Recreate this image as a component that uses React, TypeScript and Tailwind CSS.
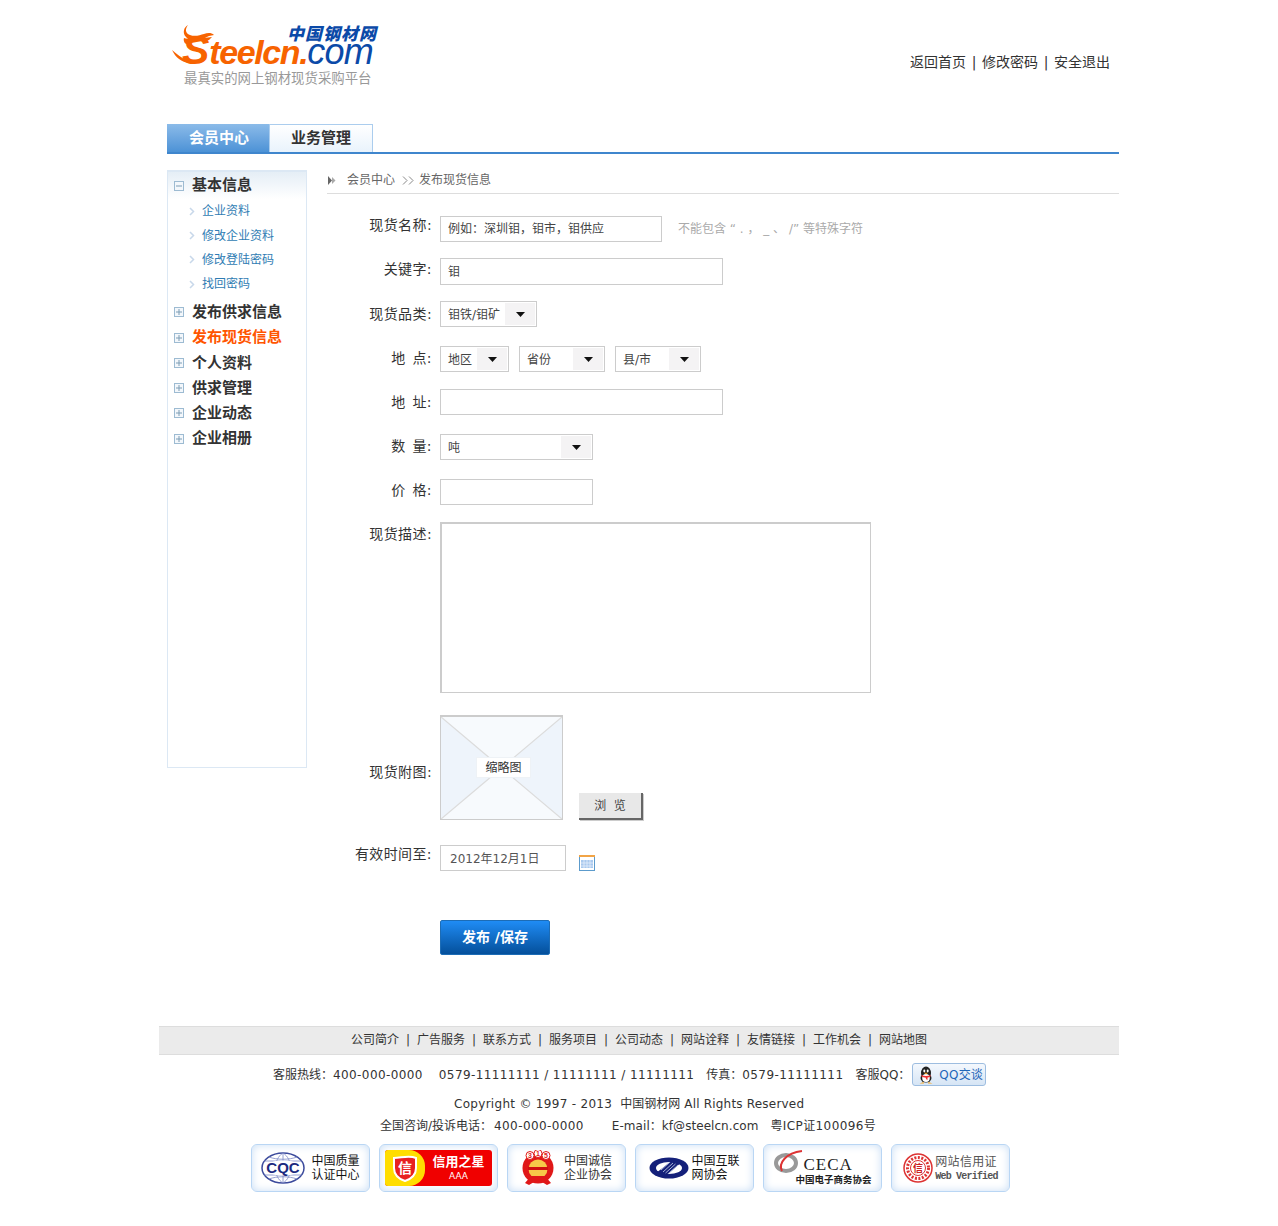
import type { ReactNode } from "react";

const font = "font-['DejaVu_Sans','Noto_Sans_CJK_SC',sans-serif]";
const footerLinks = ["公司简介", "广告服务", "联系方式", "服务项目", "公司动态", "网站诠释", "友情链接", "工作机会", "网站地图"];

function Caret() {
  return (
    <svg width="9" height="5" viewBox="0 0 9 5">
      <path d="M0 0h9L4.5 5z" fill="#111" />
    </svg>
  );
}

function TreeIcon({ open }: { open?: boolean }) {
  return (
    <svg width="10" height="10" viewBox="0 0 10 10" className="shrink-0">
      <rect x="0.5" y="0.5" width="9" height="9" fill="#f3f7fb" stroke="#9dbbd2" />
      <path d="M2 5h6" stroke="#7d9db5" />
      {!open && <path d="M5 2v6" stroke="#7d9db5" />}
    </svg>
  );
}

function SubItem({ children }: { children: ReactNode }) {
  return (
    <div className="flex h-[24.4px] items-center pl-[21px]">
      <svg width="6" height="9" viewBox="0 0 6 9" className="shrink-0">
        <path d="M1 1l3.5 3.5L1 8" fill="none" stroke="#c8d8ea" strokeWidth="1.5" />
      </svg>
      <span className="ml-[7px] text-[12px] text-[#2f7cb3]">{children}</span>
    </div>
  );
}

function MenuItem({ children, active }: { children: ReactNode; active?: boolean }) {
  return (
    <div className="flex h-[25.3px] items-center pl-[6px]">
      <TreeIcon />
      <span className={active ? "ml-[8px] text-[15px] font-bold text-[#ff5500]" : "ml-[8px] text-[15px] font-bold text-[#333]"}>
        {children}
      </span>
    </div>
  );
}

function Row({ label, className, labelClass, children }: { label: string; className: string; labelClass: string; children: ReactNode }) {
  return (
    <div className={`flex ${className}`}>
      <div className={`w-[105px] shrink-0 whitespace-pre text-right text-[14px] leading-[20px] tracking-[0.4px] text-[#333] [word-spacing:2px] ${labelClass}`}>{label}</div>
      <div className="ml-[8px] flex">{children}</div>
    </div>
  );
}

function Select({ text, className }: { text: string; className: string }) {
  return (
    <div className={`flex h-[26px] items-stretch justify-between border border-[#ccc] bg-white p-[1px] ${className}`}>
      <span className="pl-[6px] text-[12px] leading-[24px] text-[#444]">{text}</span>
      <span className="flex w-[30px] items-center justify-center bg-[#f4f3f4]">
        <Caret />
      </span>
    </div>
  );
}

function Badge({ children }: { children: ReactNode }) {
  return (
    <div className="flex h-[48px] w-[119px] items-center justify-center rounded-[6px] border border-[#b9d6f4] bg-white shadow-[inset_0_0_8px_#c9def5]">
      {children}
    </div>
  );
}

function Logo() {
  return (
    <div className="relative ml-[5px] mt-[24px] h-[64px] w-[215px] font-['Liberation_Sans',sans-serif] italic">
      <div className="mt-[-1px] pl-[115px] font-['Noto_Sans_CJK_SC',sans-serif] text-[17px] font-black leading-[20px] tracking-[1px] text-[#0b4aa8]">
        中国钢材网
      </div>
      <div className="mt-[-8px] flex items-baseline whitespace-nowrap pl-[10px] leading-[30px]">
        <span className="text-[41px] font-bold text-[#f76300]">S</span>
        <span className="text-[34px] font-bold tracking-[-1.4px] text-[#f76300]">teelcn.</span>
        <span className="text-[36px] tracking-[-0.8px] text-[#0b4aa8]">com</span>
      </div>
      <div className="mt-[2px] pl-[12px] font-['Noto_Sans_CJK_SC',sans-serif] text-[13.4px] not-italic leading-[16px] text-[#999]">
        最真实的网上钢材现货采购平台
      </div>
      <svg width="46" height="42" viewBox="0 0 46 42" className="absolute left-0 top-0">
        <path
          d="M16 1c-3 4-3 8 2 10 5 2 10 0 14-1 3-1 7-2 10 1l-5 1c-3 1-5 3-9 4-5 1-11 1-14-3-4-4-2-10 2-12z"
          fill="#f76300"
        />
        <path d="M12 14c6 2 14 1 28-1l-3 3c-9 1-17 3-21 4-3 1-5-3-4-6z" fill="#f76300" />
        <path d="M0 26c5 4 9 8 15 10 3 1 6 1 9 1-6 3-12 2-17-2-3-2-5-5-7-9z" fill="#f76300" />
      </svg>
    </div>
  );
}

export default function App() {
  return (
    <div className={`mx-auto h-[1226px] w-[960px] bg-white ${font}`}>
      <div className="flex h-[124px] justify-between pl-[8px] pr-[9px]">
        <Logo />
        <div className="mt-[53px] flex text-[14px] leading-[18px] text-[#333]">
          <span>返回首页</span>
          <span className="w-[16px] text-center">|</span>
          <span>修改密码</span>
          <span className="w-[16px] text-center">|</span>
          <span>安全退出</span>
        </div>
      </div>

      <div className="ml-[8px] flex h-[30px] border-b-2 border-[#3f86cd]">
        <div className="flex w-[102px] items-center justify-center bg-gradient-to-b from-[#8bbbe9] to-[#4c92d6] pl-[2px] text-[15px] font-bold text-white">
          会员中心
        </div>
        <div className="flex w-[104px] items-center justify-center border-x border-t border-[#abcdee] bg-gradient-to-b from-white to-[#e9f3fc] text-[15px] font-bold text-[#333]">
          业务管理
        </div>
      </div>

      <div className="ml-[8px] mt-[16px] flex">
        <aside className="h-[598px] w-[140px] shrink-0 border border-t-2 border-[#dce8f4]">
          <div className="flex h-[27px] items-center bg-gradient-to-b from-[#e5eef6] to-white pl-[6px]">
            <TreeIcon open />
            <span className="ml-[8px] text-[15px] font-bold text-[#333]">基本信息</span>
          </div>
          <SubItem>企业资料</SubItem>
          <SubItem>修改企业资料</SubItem>
          <SubItem>修改登陆密码</SubItem>
          <SubItem>找回密码</SubItem>
          <div className="mt-[3px]">
            <MenuItem>发布供求信息</MenuItem>
            <MenuItem active>发布现货信息</MenuItem>
            <MenuItem>个人资料</MenuItem>
            <MenuItem>供求管理</MenuItem>
            <MenuItem>企业动态</MenuItem>
            <MenuItem>企业相册</MenuItem>
          </div>
        </aside>

        <main className="ml-[20px] w-[792px]">
          <div className="flex h-[24px] items-center border-b border-[#ddd] pb-[3px] pl-[1px] text-[12px] text-[#666]">
            <svg width="8" height="9" viewBox="0 0 8 9">
              <path d="M0 0l4 4.5L0 9z" fill="#666" />
              <path d="M4 1l3.5 3.5L4 8z" fill="#aaa" />
            </svg>
            <span className="ml-[11px]">会员中心</span>
            <svg width="13" height="9" viewBox="0 0 13 9" className="ml-[7px]">
              <path d="M1 .5l4 4-4 4M7 .5l4 4-4 4" fill="none" stroke="#888" />
            </svg>
            <span className="ml-[4px]">发布现货信息</span>
          </div>

          <Row label="现货名称:" className="mt-[22px]" labelClass="mt-[-1px]">
            <div className="h-[26px] w-[222px] border border-[#ccc] pl-[7px] text-[12px] leading-[24px] text-[#444]">
              例如：深圳钼，钼市，钼供应
            </div>
            <span className="ml-[16px] whitespace-pre text-[12px] leading-[26px] text-[#aaa]">不能包含 “ . ， _ 、 /” 等特殊字符</span>
          </Row>

          <Row label="关键字:" className="mt-[16px]" labelClass="mt-[1px]">
            <div className="h-[27px] w-[283px] border border-[#ccc] pl-[7px] pt-[1px] text-[12px] leading-[25px] text-[#444]">钼</div>
          </Row>

          <Row label="现货品类:" className="mt-[16px]" labelClass="mt-[3px]">
            <Select text="钼铁/钼矿" className="w-[97px]" />
          </Row>

          <Row label="地 点:" className="mt-[19px]" labelClass="mt-[2px]">
            <Select text="地区" className="w-[69px]" />
            <Select text="省份" className="ml-[10px] w-[86px]" />
            <Select text="县/市" className="ml-[10px] w-[86px]" />
          </Row>

          <Row label="地 址:" className="mt-[17px]" labelClass="mt-[3px]">
            <div className="h-[26px] w-[283px] border border-[#ccc]" />
          </Row>

          <Row label="数 量:" className="mt-[19px]" labelClass="mt-[2px]">
            <Select text="吨" className="w-[153px]" />
          </Row>

          <Row label="价 格:" className="mt-[19px]" labelClass="mt-[1px]">
            <div className="h-[26px] w-[153px] border border-[#ccc]" />
          </Row>

          <Row label="现货描述:" className="mt-[17px]" labelClass="mt-[2px]">
            <div className="h-[171px] w-[431px] border border-l-2 border-t-2 border-[#ccc]" />
          </Row>

          <Row label="现货附图:" className="mt-[22px] items-center" labelClass="mt-[8px]">
            <div className="relative h-[105px] w-[123px] border border-t-2 border-[#ccc] bg-[#f7fafd]">
              <svg width="121" height="102" viewBox="0 0 121 102" className="block">
                <path d="M0 0L60.5 51L0 102zM121 0L60.5 51L121 102z" fill="#eef4fb" />
                <path d="M0 0L121 102M121 0L0 102" stroke="#dcdcdc" strokeWidth="1.3" />
              </svg>
              <div className="absolute left-[35px] top-[40px] flex h-[21px] w-[55px] items-center justify-center border border-[#eef2f6] bg-white text-[12px] text-[#333]">
                缩略图
              </div>
            </div>
            <div className="ml-[16px] mt-[78px] flex h-[27px] w-[64px] items-center justify-center whitespace-pre border-b-2 border-r-2 border-[#666] bg-[#e8e8e8] text-[12px] text-[#444] shadow-[1px_1px_0_#ccc]">
              浏  览
            </div>
          </Row>

          <Row label="有效时间至:" className="mt-[25px]" labelClass="mt-[-1px]">
            <div className="h-[26px] w-[126px] border border-[#ccc] pl-[9px] text-[12px] leading-[26px] text-[#555]">2012年12月1日</div>
            <svg width="16" height="16" viewBox="0 0 16 16" className="ml-[13px] mt-[10px]">
              <rect x="0.5" y="0.5" width="15" height="15" fill="#fff" stroke="#5c9bcc" />
              <rect x="0" y="0" width="16" height="2" fill="#f2a446" />
              <rect x="2" y="5" width="12" height="8" fill="#a9c9ee" />
              <path d="M5 5v8M8 5v8M11 5v8M2 8h12M2 11h12" stroke="#e4eefa" strokeWidth="0.8" />
            </svg>
          </Row>

          <div className="ml-[113px] mt-[49px] flex h-[35px] w-[110px] items-center justify-center rounded-[2px] border border-[#1c6cb6] bg-gradient-to-b from-[#1f8cf5] to-[#05509b] text-[14px] font-bold text-white">
            发布 /保存
          </div>
        </main>
      </div>

      <footer className="mt-[71px] text-[#333]">
        <div className="flex h-[29px] items-center justify-center border-y border-[#ddd] bg-[#ebebeb] pb-[2px] text-[12px]">
          {footerLinks.map((link, i) => (
            <span key={link} className="flex">
              {i > 0 && <span className="w-[18px] text-center">|</span>}
              <span>{link}</span>
            </span>
          ))}
        </div>

        <div className="mt-[8px] flex h-[23px] items-center pl-[114px] text-[12px]">
          <span className="whitespace-nowrap pt-[1px]">客服热线：</span>
          <span className="whitespace-pre pt-[1px] tracking-[0.4px]">400-000-0000</span>
          <span className="ml-[16px] whitespace-pre pt-[1px] tracking-[0.4px]">0579-11111111 / 11111111 / 11111111</span>
          <span className="ml-[12px] whitespace-nowrap pt-[1px]">传真：</span>
          <span className="whitespace-pre pt-[1px] tracking-[0.4px]">0579-11111111</span>
          <span className="ml-[12px] whitespace-nowrap pt-[1px]">客服QQ：</span>
          <span className="ml-[2px] flex h-[23px] w-[74px] shrink-0 items-center rounded-[3px] border border-[#9dbde0] bg-gradient-to-b from-[#f4f8fd] to-[#d6e5f5] pl-[5px] text-[#1f66b8]">
            <svg width="16" height="18" viewBox="0 0 16 18">
              <ellipse cx="8" cy="7" rx="5" ry="6.5" fill="#222" />
              <ellipse cx="8" cy="12" rx="5.5" ry="4.5" fill="#222" />
              <ellipse cx="8" cy="12" rx="3.8" ry="4" fill="#fff" />
              <ellipse cx="6.3" cy="5" rx="1" ry="1.4" fill="#fff" />
              <ellipse cx="9.7" cy="5" rx="1" ry="1.4" fill="#fff" />
              <path d="M6 6.8h4l-2 1.6z" fill="#f5a623" />
              <path d="M3.5 9c2.5 1.2 6.5 1.2 9 0v1.6c-1 .6-2 .9-3 1v2.4l-1.6-1v-1.300c-1.700 0-3.200-.5-4.400-1.100z" fill="#e33" />
              <path d="M1.500 17.500l4-1.500 .5 1.500zM14.500 17.500l-4-1.500-.5 1.500z" fill="#f5a623" />
            </svg>
            <span className="ml-[5px] tracking-[0.2px]">QQ交谈</span>
          </span>
        </div>

        <div className="mt-[7px] flex whitespace-pre pl-[295px] text-[12px] leading-[22px]">
          <span className="tracking-[0.3px]">Copyright © 1997 - 2013</span>
          <span className="ml-[8px]">中国钢材网</span>
          <span className="ml-[4px] tracking-[0.2px]">All Rights Reserved</span>
        </div>
        <div className="flex whitespace-pre pl-[221px] text-[12px] leading-[22px]">
          <span>全国咨询/投诉电话：</span>
          <span className="ml-[2px] tracking-[0.4px]">400-000-0000</span>
          <span className="ml-[28px] tracking-[0.05px]">E-mail：kf@steelcn.com</span>
          <span className="ml-[12px] tracking-[0.4px]">粤ICP证100096号</span>
        </div>

        <div className="ml-[92px] mt-[7px] flex gap-[9px]">
          <Badge>
            <svg width="44" height="32" viewBox="0 0 44 32">
              <ellipse cx="22" cy="16" rx="21" ry="15" fill="none" stroke="#3b4a9c" strokeWidth="1.5" />
              <path d="M22 1v30M3 9h38M3 23h38M8 5c8 3 20 3 28 0M8 27c8-3 20-3 28 0M22 1c-10 6-10 24 0 30M22 1c10 6 10 24 0 30" fill="none" stroke="#7a86c4" strokeWidth="0.8" />
              <ellipse cx="22" cy="16" rx="19" ry="7.500" fill="#fff" />
              <text x="22" y="21" textAnchor="middle" fontSize="15" fontWeight="700" fill="#1b2a80" fontFamily="Liberation Sans">CQC</text>
            </svg>
            <span className="ml-[6px] text-[12px] leading-[14px] text-[#111]">中国质量<br />认证中心</span>
          </Badge>
          <Badge>
            <div className="flex h-[36px] w-[107px] overflow-hidden rounded-[3px] bg-[#f00000]">
              <div className="flex w-[40px] items-center justify-center rounded-r-[16px] bg-[#ffdd00]">
                <svg width="24" height="27" viewBox="0 0 24 27">
                  <path d="M1 3c7 0 15-3 22 0v10c0 7-5 11-11 13C6 24 1 20 1 13z" fill="#e82020" stroke="#fff" strokeWidth="2" />
                  <text x="12" y="18" textAnchor="middle" fontSize="14" fontWeight="700" fill="#fff" fontFamily="Noto Sans CJK SC">信</text>
                </svg>
              </div>
              <div className="flex flex-1 flex-col items-center justify-center text-white">
                <span className="text-[13px] font-bold leading-[16px]">信用之星</span>
                <span className="text-[9px] leading-[12px]">AAA</span>
              </div>
            </div>
          </Badge>
          <Badge>
            <svg width="34" height="36" viewBox="0 0 34 36">
              <circle cx="17" cy="18" r="15.500" fill="#e01818" />
              <circle cx="17" cy="19" r="9.500" fill="#f7c948" />
              <rect x="7" y="17" width="20" height="3" fill="#d01010" />
              <circle cx="9" cy="5.500" r="4" fill="#fff" stroke="#e01818" />
              <circle cx="17" cy="3.500" r="4" fill="#fff" stroke="#e01818" />
              <circle cx="25" cy="5.500" r="4" fill="#fff" stroke="#e01818" />
              <path d="M4 33l6-7h14l6 7-4 2-5-3h-8l-5 3z" fill="#e01818" />
              <text x="9" y="8" textAnchor="middle" fontSize="7" fontWeight="700" fill="#e01818" fontFamily="Liberation Sans">3</text>
              <text x="17" y="6" textAnchor="middle" fontSize="7" fontWeight="700" fill="#e01818" fontFamily="Liberation Sans">1</text>
              <text x="25" y="8" textAnchor="middle" fontSize="7" fontWeight="700" fill="#e01818" fontFamily="Liberation Sans">5</text>
            </svg>
            <span className="ml-[9px] text-[12px] leading-[14px] text-[#333]">中国诚信<br />企业协会</span>
          </Badge>
          <Badge>
            <svg width="40" height="24" viewBox="0 0 40 24">
              <ellipse cx="20" cy="12" rx="19.500" ry="10.500" fill="#14207a" />
              <ellipse cx="20" cy="12" rx="13" ry="6" fill="#fff" />
              <path d="M7 17L24 4l9 2-17 14z" fill="#14207a" />
              <path d="M14 16l10-9M16.500 17l10-9M19 18l10-9M12 14l9-8" stroke="#a7b2d4" strokeWidth="1" />
            </svg>
            <span className="ml-[2px] text-[12px] leading-[14px] text-[#111]">中国互联<br />网协会</span>
          </Badge>
          <Badge>
            <div className="relative h-[36px] w-[102px]">
              <svg width="34" height="26" viewBox="0 0 34 26" className="absolute left-0 top-0">
                <ellipse cx="14" cy="13" rx="10" ry="8" fill="none" stroke="#999" strokeWidth="4" />
                <path d="M10 21C6 13 14 3 30 1" fill="none" stroke="#d33" strokeWidth="2" />
              </svg>
              <span className="absolute left-[32px] top-[5px] font-['Liberation_Serif',serif] text-[17px] leading-[20px] tracking-[1px] text-[#222]">CECA</span>
              <span className="absolute left-[24px] top-[24px] whitespace-nowrap text-[9.500px] font-bold leading-[12px] text-[#222]">中国电子商务协会</span>
            </div>
          </Badge>
          <Badge>
            <svg width="30" height="30" viewBox="0 0 30 30">
              <circle cx="15" cy="15" r="14" fill="#fff" stroke="#d33" strokeWidth="1.500" />
              <circle cx="15" cy="15" r="7.500" fill="none" stroke="#d33" strokeWidth="1" />
              <circle cx="15" cy="15" r="10.500" fill="none" stroke="#d33" strokeWidth="3" strokeDasharray="2 1.500" />
              <text x="15" y="19" textAnchor="middle" fontSize="10" fontWeight="700" fill="#c22" fontFamily="Noto Sans CJK SC">信</text>
            </svg>
            <span className="ml-[2px] whitespace-nowrap pt-[3px] font-['Liberation_Mono','Noto_Sans_CJK_SC',monospace] text-[12px] leading-[13px] text-[#555]">
              <span className="tracking-[0.3px]">网站信用证</span>
              <br />
              <span className="text-[10px] font-bold tracking-[-0.8px]">Web Verified</span>
            </span>
          </Badge>
        </div>
      </footer>
    </div>
  );
}
